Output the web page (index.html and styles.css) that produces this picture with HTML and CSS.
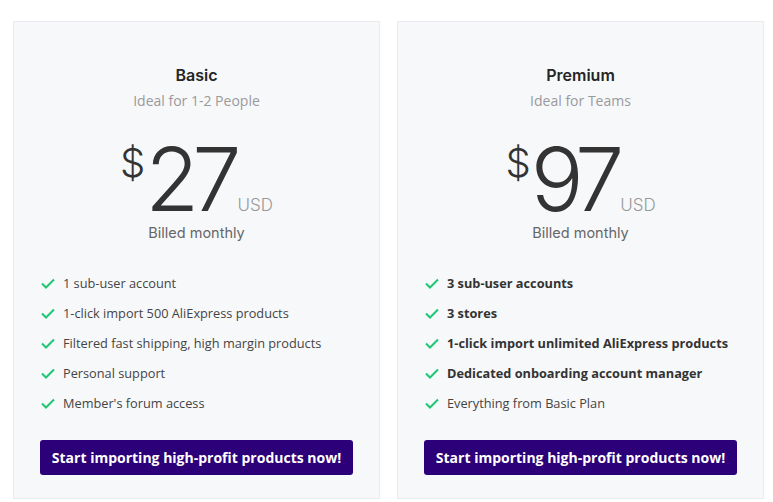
FILE: index.html
```html
<!DOCTYPE html>
<html lang="en">
<head>
<meta charset="utf-8">
<title>Pricing</title>
<link rel="stylesheet" href="styles.css">
</head>
<body>
<div class="plans">
  <div class="card">
    <h2 class="title">Basic</h2>
    <p class="sub">Ideal for 1-2 People</p>
    <div class="price"><span class="cur">$</span><span class="amt">27</span><span class="unit">USD</span></div>
    <p class="billed">Billed monthly</p>
    <ul class="features">
      <li><svg class="chk" viewBox="0 0 14 11"><path d="M1 5.5 L5 9.5 L13 1.5"/></svg>1 sub-user account</li>
      <li><svg class="chk" viewBox="0 0 14 11"><path d="M1 5.5 L5 9.5 L13 1.5"/></svg>1-click import 500 AliExpress products</li>
      <li><svg class="chk" viewBox="0 0 14 11"><path d="M1 5.5 L5 9.5 L13 1.5"/></svg>Filtered fast shipping, high margin products</li>
      <li><svg class="chk" viewBox="0 0 14 11"><path d="M1 5.5 L5 9.5 L13 1.5"/></svg>Personal support</li>
      <li><svg class="chk" viewBox="0 0 14 11"><path d="M1 5.5 L5 9.5 L13 1.5"/></svg>Member's forum access</li>
    </ul>
    <a class="btn" href="#">Start importing high-profit products now!</a>
  </div>
  <div class="card">
    <h2 class="title">Premium</h2>
    <p class="sub">Ideal for Teams</p>
    <div class="price"><span class="cur">$</span><span class="amt">97</span><span class="unit">USD</span></div>
    <p class="billed">Billed monthly</p>
    <ul class="features">
      <li class="strong"><svg class="chk" viewBox="0 0 14 11"><path d="M1 5.5 L5 9.5 L13 1.5"/></svg>3 sub-user accounts</li>
      <li class="strong"><svg class="chk" viewBox="0 0 14 11"><path d="M1 5.5 L5 9.5 L13 1.5"/></svg>3 stores</li>
      <li class="strong"><svg class="chk" viewBox="0 0 14 11"><path d="M1 5.5 L5 9.5 L13 1.5"/></svg>1-click import unlimited AliExpress products</li>
      <li class="strong"><svg class="chk" viewBox="0 0 14 11"><path d="M1 5.5 L5 9.5 L13 1.5"/></svg>Dedicated onboarding account manager</li>
      <li><svg class="chk" viewBox="0 0 14 11"><path d="M1 5.5 L5 9.5 L13 1.5"/></svg>Everything from Basic Plan</li>
    </ul>
    <a class="btn" href="#">Start importing high-profit products now!</a>
  </div>
</div>
</body>
</html>
```
FILE: styles.css
```css
* { box-sizing: border-box; }
html, body { margin: 0; background: #fff; }
body {
  padding: 21px 9px 0 13px;
  font-family: "Open Sans", "Liberation Sans", sans-serif;
}
.plans {
  display: flex;
  gap: 17px;
}
.card {
  width: 367px;
  height: 478px;
  background: #f7f8fa;
  border: 1px solid #e8eaed;
  padding: 41px 26px 23px;
  display: flex;
  flex-direction: column;
}
.title {
  margin: 0;
  text-align: center;
  font-family: "Inter", "Lato", sans-serif;
  font-weight: 600;
  font-size: 16px;
  line-height: 24px;
  color: #252525;
}
.sub {
  margin: 3px 0 0;
  text-align: center;
  font-size: 14px;
  line-height: 22px;
  color: #9a9a9a;
}
.price {
  margin-top: 23px;
  height: 88px;
  display: flex;
  justify-content: center;
  align-items: baseline;
  font-family: "Inter", "Lato", sans-serif;
  color: #333;
  white-space: nowrap;
}
.cur {
  align-self: flex-start;
  font-size: 40px;
  line-height: 56px;
  font-weight: 300;
}
.amt {
  font-size: 88px;
  line-height: 88px;
  font-weight: 300;
  letter-spacing: -7px;
}
.unit {
  font-size: 17px;
  line-height: 20px;
  font-weight: 300;
  color: #999;
  margin-left: 3px;
}
.billed {
  margin: 0;
  text-align: center;
  font-family: "Inter", "Lato", sans-serif;
  font-size: 14.5px;
  line-height: 20px;
  color: #666;
}
.features {
  list-style: none;
  margin: 25px 0 0;
  padding: 0;
}
.features li {
  display: flex;
  align-items: center;
  height: 30px;
  font-size: 12.75px;
  color: #444;
}
.features li.strong {
  font-weight: 700;
  color: #333;
}
.chk {
  width: 14px;
  height: 11px;
  margin: 0 8px 0 1px;
  flex: none;
}
.chk path {
  fill: none;
  stroke: #1ec773;
  stroke-width: 2;
}
.btn {
  margin-top: 22px;
  display: block;
  height: 35px;
  line-height: 35px;
  background: #2c0078;
  color: #fff;
  border-radius: 3px;
  text-align: center;
  font-weight: 700;
  font-size: 14px;
  text-decoration: none;
}
```
